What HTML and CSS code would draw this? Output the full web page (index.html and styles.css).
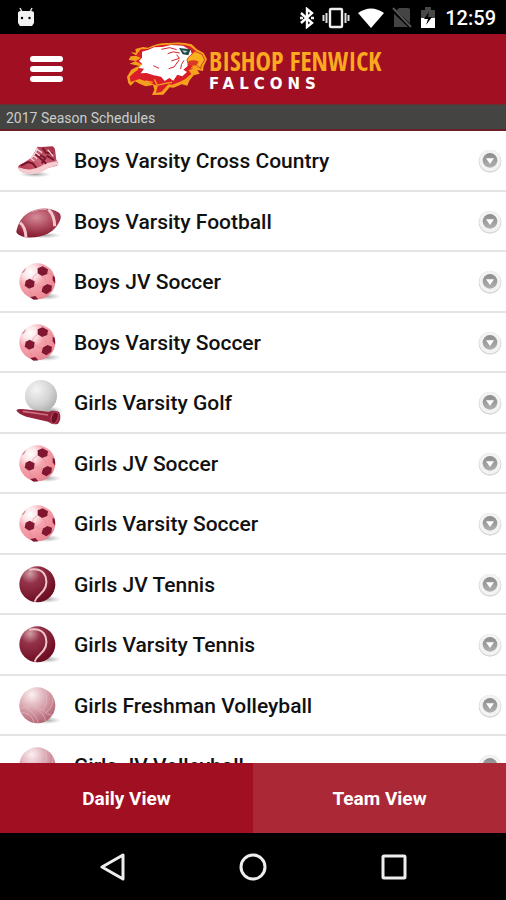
FILE: index.html
```html
<!DOCTYPE html>
<html lang="en">
<head>
<meta charset="utf-8">
<meta name="viewport" content="width=device-width, initial-scale=1">
<title>Bishop Fenwick Falcons</title>
<link rel="stylesheet" href="styles.css">
</head>
<body>
<svg class="sprite" aria-hidden="true">
  <defs>
    <radialGradient id="g-pink" cx=".3" cy=".25" r=".8"><stop offset="0" stop-color="#fff"/><stop offset=".25" stop-color="#fde3e6"/><stop offset=".5" stop-color="#f5a4ae"/><stop offset="1" stop-color="#ea8491"/></radialGradient>
    <radialGradient id="g-golf" cx=".35" cy=".3" r=".75"><stop offset="0" stop-color="#f4f4f4"/><stop offset=".6" stop-color="#d4d4d4"/><stop offset="1" stop-color="#b0b0b0"/></radialGradient>
    <radialGradient id="g-tennis" cx=".3" cy=".2" r=".8"><stop offset="0" stop-color="#d3a0a8"/><stop offset=".35" stop-color="#94324a"/><stop offset="1" stop-color="#6d0d22"/></radialGradient>
    <radialGradient id="g-volley" cx=".35" cy=".2" r=".85"><stop offset="0" stop-color="#fbf0f2"/><stop offset=".5" stop-color="#d9a4ae"/><stop offset="1" stop-color="#b05f70"/></radialGradient>
    <radialGradient id="g-foot" cx=".45" cy=".3" r=".7"><stop offset="0" stop-color="#d58c98"/><stop offset=".5" stop-color="#b04c60"/><stop offset="1" stop-color="#84182f"/></radialGradient>
    <linearGradient id="g-shoe" x1="0" y1="1" x2="1" y2="0"><stop offset="0" stop-color="#a92940"/><stop offset=".5" stop-color="#d0667a"/><stop offset="1" stop-color="#9a2239"/></linearGradient>
    <linearGradient id="g-chev" x1="0" y1="0" x2="0" y2="1"><stop offset="0" stop-color="#8c8c8c"/><stop offset="1" stop-color="#b0b0b0"/></linearGradient>
    <radialGradient id="g-shadow"><stop offset="0" stop-color="#777" stop-opacity=".7"/><stop offset="1" stop-color="#999" stop-opacity="0"/></radialGradient>
    <clipPath id="c-ball"><circle cx="67" cy="60" r="54"/></clipPath>
  </defs>
  <symbol id="shoe" viewBox="0 0 150 120">
    <ellipse cx="60" cy="100" rx="48" ry="9" fill="url(#g-shadow)"/>
    <path d="M10 80Q8 73 20 69L47 52 59 33 67 17 79 18 112 16Q120 18 121 34L124 57Q134 66 126 74L96 82 78 93 41 97Q12 94 10 80Z" fill="url(#g-shoe)"/>
    <path d="M10 79Q30 87 50 85L75 77 94 67 126 60 131 71 102 80 82 92Q44 107 14 90Z" fill="#f6ccd1"/>
    <path d="M17 74L40 63 54 68 64 81M61 38L94 68M83 20L92 35 113 37M75 42L91 51 80 67M95 44L117 57" fill="none" stroke="#77152c" stroke-width="6"/>
    <path d="M49 53L58 60M55 43L66 53M61 34L74 44M66 25L81 35M48 53L61 36 67 20M98 26L115 46" fill="none" stroke="#f7d5da" stroke-width="4"/>
  </symbol>
  <symbol id="football" viewBox="0 0 150 120">
    <ellipse cx="86" cy="100" rx="54" ry="9" fill="url(#g-shadow)"/>
    <path d="M4 88Q14 40 56 25Q96 11 132 32Q142 41 133 60Q116 94 77 103Q34 112 11 98Q3 94 4 88Z" fill="url(#g-foot)"/>
    <path d="M15 62Q31 74 33 106M100 22Q119 40 119 73" fill="none" stroke="#f3c6cd" stroke-width="9"/>
    <path d="M50 29Q76 18 96 22" fill="none" stroke="#e4a9b4" stroke-width="3"/>
  </symbol>
  <symbol id="soccer" viewBox="0 0 150 120">
    <ellipse cx="93" cy="103" rx="45" ry="11" fill="url(#g-shadow)"/>
    <circle cx="67" cy="58" r="54" fill="url(#g-pink)"/>
    <g clip-path="url(#c-ball)">
      <path d="M68 19L83 13 99 22 97 36 81 42 68 34ZM32 56L44 50 59 58 57 74 42 80 29 71ZM83 74L97 66 111 71 109 86 94 97 80 89ZM46 105L61 102 70 112 55 114ZM113 41L122 45 121 66 113 55Z" fill="#7f1730"/>
      <path d="M13 36L24 24 34 17 27 31Z" fill="#c98490"/>
      <path d="M68 34L55 44 52 55M81 42L91 51 94 68M59 64L72 75 84 77M43 80L51 104M93 97L78 106M97 30L115 42" fill="none" stroke="#e38e9a" stroke-width="2"/>
    </g>
  </symbol>
  <symbol id="golf" viewBox="0 0 150 150">
    <ellipse cx="108" cy="98" rx="34" ry="13" fill="url(#g-shadow)"/>
    <circle cx="78" cy="54" r="48" fill="url(#g-golf)"/>
    <path d="M4 97Q9 91 28 94L101 101Q127 94 134 104 140 124 129 137 116 143 99 131L34 116Q9 108 4 97Z" fill="#94243c"/>
    <path d="M24 100L99 111" stroke="#cc7182" stroke-width="5"/>
    <ellipse cx="119" cy="119" rx="10" ry="18" transform="rotate(18 119 119)" fill="#6f1029" stroke="#be5268" stroke-width="3"/>
  </symbol>
  <symbol id="tennis" viewBox="0 0 150 120">
    <ellipse cx="94" cy="103" rx="45" ry="11" fill="url(#g-shadow)"/>
    <circle cx="67" cy="58" r="54" fill="url(#g-tennis)"/>
    <path d="M43 14Q83 7 92 36Q101 67 74 89Q63 98 59 110" fill="none" stroke="#efc5cb" stroke-width="6"/>
  </symbol>
  <symbol id="volley" viewBox="0 0 150 120">
    <ellipse cx="94" cy="103" rx="45" ry="11" fill="url(#g-shadow)"/>
    <circle cx="67" cy="58" r="54" fill="url(#g-volley)"/>
    <g clip-path="url(#c-ball)" fill="none" stroke="#e3bcc4" stroke-width="2">
      <path d="M14 69Q54 48 83 73T119 80M31 63Q64 85 71 114M54 62Q89 80 92 106M83 73Q103 48 90 13M95 79Q118 57 113 29M14 80Q49 77 58 111"/>
    </g>
  </symbol>
  <symbol id="chev" viewBox="0 0 72 72">
    <circle cx="36" cy="37" r="34" fill="#d4d4d4"/>
    <circle cx="36" cy="35" r="32" fill="#f3f3f3"/>
    <circle cx="36" cy="34" r="22" fill="url(#g-chev)"/>
    <path d="M24 28H48L36 45Z" fill="#fff"/>
  </symbol>
</svg>
<div class="screen">
  <div class="status">
    <svg class="droid" viewBox="0 0 18 20" aria-hidden="true"><path d="M3 1L5 5M15 1L13 5" stroke="#ddd" stroke-width="1.5"/><path d="M1 6Q1 4 4 4H14Q17 4 17 6V16L15 19H3L1 16Z" fill="#f2f2f2"/><circle cx="5" cy="11" r="1.2"/><circle cx="12.500" cy="11" r="1.200"/></svg>
    <div class="status-icons">
      <svg width="14" height="22" viewBox="0 0 14 22" aria-hidden="true"><path d="M1 6L12 16 7 20V2L12 6 1 16" fill="none" stroke="#fff" stroke-width="2.400"/><path d="M0 11H3M11 11H14" stroke="#eee" stroke-width="2.400"/></svg>
      <svg width="28" height="22" viewBox="0 0 28 22" aria-hidden="true"><rect x="8" y="2" width="12" height="18" rx="1" fill="none" stroke="#eee" stroke-width="2.400"/><path d="M4.500 6V16M23.500 6V16M1.500 8V14M26.500 8V14" stroke="#ddd" stroke-width="2"/></svg>
      <svg width="26" height="22" viewBox="0 0 26 22" aria-hidden="true"><path d="M0 6Q13-3 26 6L13 21Z" fill="#fff"/></svg>
      <svg width="20" height="22" viewBox="0 0 20 22" aria-hidden="true"><path d="M2 6L7 1H16Q18 1 18 3V20H2Z" fill="#444"/><path d="M0 2L19 20" stroke="#000" stroke-width="4"/><path d="M1 1L19 20" stroke="#555" stroke-width="2"/></svg>
      <svg width="16" height="22" viewBox="0 0 16 22" aria-hidden="true"><path d="M1 3H5V0H11V3H15V11H1Z" fill="#484848"/><path d="M1 11H15V21H1Z" fill="#fff"/><path d="M9 5L4 12H8L6 18 12 10H8Z" fill="#000"/></svg>
      <span class="clock">12:59</span>
    </div>
  </div>
  <header class="header">
    <button class="menu" type="button" aria-label="Menu"><span></span><span></span><span></span></button>
    <div class="brand">
      <svg class="eagle" viewBox="18 18 246 168" aria-hidden="true">
        <path d="M46 42L69 36 84 38Q113 22 148 24 184 20 215 28L231 43 251 54 261 73 251 94 249 108 232 105 239 116 221 121 208 137 202 152 185 148 161 158 149 157 130 179 96 180 103 164 99 150 77 154 60 147 45 139 32 152 25 145 21 125 34 104 48 97 58 93 29 86 47 78 26 75 32 64 50 62 32 52 48 53Z" fill="#f5a11d"/>
        <path d="M62 43L83 42Q112 28 147 29 187 25 210 34L228 48 207 70 220 101 205 105 214 116 196 132 180 140 157 149 145 148 125 170 108 174 113 153 90 143 58 132 32 141 29 125 51 104 67 89 46 79 63 69 47 62Z" fill="#d91d29"/>
        <path d="M66 50L86 44 102 37 127 36 153 30 189 32 212 46 217 62 202 73 203 93 190 104 201 111 187 124 172 119 160 137 148 129 134 138 123 125 101 121 80 114 62 115 72 101 56 99 67 87 57 78 66 68Z" fill="#fff"/>
        <path d="M124 43L149 38 170 44M143 56Q158 46 179 54M170 59L178 70 154 78M178 74L162 96 146 101M192 76Q182 87 182 102M100 92L117 100M49 123L73 129" fill="none" stroke="#d6212e" stroke-width="3"/>
        <path d="M205 67L225 49 246 58 254 75 244 90 242 101 229 89 207 88 201 76Z" fill="#f9b21d" stroke="#dc4020" stroke-width="3"/>
        <path d="M205 79Q222 72 236 80L229 91 208 93Z" fill="#dc3826"/>
        <path d="M213 98L235 102M103 133L112 151 136 145 156 142M37 112L53 103M76 138L98 142" fill="none" stroke="#f5a11d" stroke-width="4"/>
        <path d="M177 39L212 43 205 61 188 58Z" fill="#264a48"/><path d="M186 46L203 48 194 54Z" fill="#b7d7ce"/>
      </svg>
      <h1 class="wordmark"><span class="school">BISHOP FENWICK</span><span class="team">FALCONS</span></h1>
    </div>
  </header>
  <h2 class="season">2017 Season Schedules</h2>
  <ul class="list">
    <li><a href="#"><svg class="sport"><use href="#shoe"/></svg><span>Boys Varsity Cross Country</span><svg class="chev"><use href="#chev"/></svg></a></li>
    <li><a href="#"><svg class="sport"><use href="#football"/></svg><span>Boys Varsity Football</span><svg class="chev"><use href="#chev"/></svg></a></li>
    <li><a href="#"><svg class="sport"><use href="#soccer"/></svg><span>Boys JV Soccer</span><svg class="chev"><use href="#chev"/></svg></a></li>
    <li><a href="#"><svg class="sport"><use href="#soccer"/></svg><span>Boys Varsity Soccer</span><svg class="chev"><use href="#chev"/></svg></a></li>
    <li><a href="#"><svg class="sport tall"><use href="#golf"/></svg><span>Girls Varsity Golf</span><svg class="chev"><use href="#chev"/></svg></a></li>
    <li><a href="#"><svg class="sport"><use href="#soccer"/></svg><span>Girls JV Soccer</span><svg class="chev"><use href="#chev"/></svg></a></li>
    <li><a href="#"><svg class="sport"><use href="#soccer"/></svg><span>Girls Varsity Soccer</span><svg class="chev"><use href="#chev"/></svg></a></li>
    <li><a href="#"><svg class="sport"><use href="#tennis"/></svg><span>Girls JV Tennis</span><svg class="chev"><use href="#chev"/></svg></a></li>
    <li><a href="#"><svg class="sport"><use href="#tennis"/></svg><span>Girls Varsity Tennis</span><svg class="chev"><use href="#chev"/></svg></a></li>
    <li><a href="#"><svg class="sport"><use href="#volley"/></svg><span>Girls Freshman Volleyball</span><svg class="chev"><use href="#chev"/></svg></a></li>
    <li><a href="#"><svg class="sport"><use href="#volley"/></svg><span>Girls JV Volleyball</span><svg class="chev"><use href="#chev"/></svg></a></li>
  </ul>
  <div class="views">
    <button type="button">Daily View</button>
    <button type="button" class="current">Team View</button>
  </div>
  <nav class="nav" aria-label="System">
    <button type="button" aria-label="Back"><svg viewBox="0 0 28 28"><path d="M25 2V26L4 14Z"/></svg></button>
    <button type="button" aria-label="Home"><svg viewBox="0 0 28 28"><circle cx="14" cy="14" r="12"/></svg></button>
    <button type="button" aria-label="Recent apps"><svg viewBox="0 0 28 28"><rect x="3" y="3" width="22" height="22" rx="1"/></svg></button>
  </nav>
</div>
</body>
</html>
```
FILE: styles.css
```css
* { box-sizing: border-box; }
body { margin: 0; font-family: Roboto, "Liberation Sans", sans-serif; background: #000; }
button { border: 0; padding: 0; background: none; font: inherit; color: inherit; }
svg { display: block; flex: none; }
.sprite { position: absolute; width: 0; height: 0; }
.screen { display: flex; flex-direction: column; height: 100vh; }

.status { display: flex; align-items: center; justify-content: space-between; height: 34px; padding: 2px 10px 0 17px; color: #fff; background: #000; }
.droid { width: 18px; height: 20px; margin-bottom: 3px; }
.status-icons { display: flex; align-items: center; gap: 8px; }
.clock { font-size: 20px; font-weight: 500; line-height: 24px; margin-left: 1px; }

.header { display: flex; align-items: center; height: 70px; background: #a01022; }
.menu { display: flex; flex-direction: column; gap: 4px; width: 33px; margin-left: 30px; }
.menu span { height: 6px; border-radius: 3px; background: #fff; }
.brand { display: flex; align-items: center; gap: 1px; margin-left: 63px; }
.eagle { width: 82px; height: 56px; }
.wordmark { display: flex; flex-direction: column; margin: 0; white-space: nowrap; }
.school { font-family: "Open Sans Condensed", "Roboto Condensed", "Liberation Sans Narrow", "Liberation Sans", sans-serif; font-size: 26px; font-weight: 700; line-height: 30px; color: #fba91f; }
.team { font-family: "DejaVu Sans", sans-serif; font-size: 15px; font-weight: 700; line-height: 16px; letter-spacing: 5px; color: #fff; }

.season { margin: 0; height: 27px; padding-left: 6px; border-top: 1px solid #68302f; border-bottom: 2px solid #6b2029; background: #444543; color: #ccc; font-size: 14px; font-weight: 400; line-height: 26px; }

.list { flex: 1; min-height: 0; overflow: hidden; margin: 0; padding: 0; list-style: none; background: #fff; }
.list li { height: 61px; border-bottom: 2px solid #e4e4e4; }
.list li:nth-child(even) { height: 60px; }
.list a { display: flex; align-items: center; height: 100%; padding: 1px 4px 0 15px; color: #111; font-size: 21px; font-weight: 500; line-height: 28px; text-decoration: none; }
.list span { flex: 1; margin-left: 9px; }
.sport { width: 50px; height: 40px; }
.sport.tall { height: 50px; }
.chev { width: 24px; height: 24px; }

.views { display: grid; grid-template-columns: 1fr 1fr; height: 70px; background: #a01022; color: #fff; font-size: 19px; font-weight: 700; }
.current { background: #ab2837; }

.nav { display: flex; justify-content: center; align-items: center; gap: 113px; height: 67px; background: #000; }
.nav svg { width: 28px; height: 28px; fill: none; stroke: #eee; stroke-width: 3; stroke-linejoin: round; }
```
